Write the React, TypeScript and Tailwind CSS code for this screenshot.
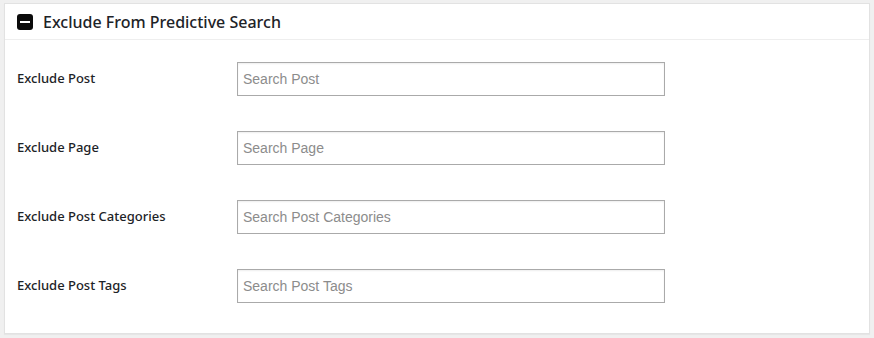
import React from "react";

const rows = [
  { label: "Exclude Post", ph: "Search Post" },
  { label: "Exclude Page", ph: "Search Page" },
  { label: "Exclude Post Categories", ph: "Search Post Categories" },
  { label: "Exclude Post Tags", ph: "Search Post Tags" },
];

export default function App() {
  return (
    <div className="w-[874px] h-[338px] bg-[#f0f0f0] pl-[4px] pt-[3px] font-['Noto_Sans',sans-serif]">
      <div className="w-[866px] h-[331px] bg-white border border-[#e2e2e2] shadow-[0_1px_1px_rgba(0,0,0,0.04)]">
        <div className="h-[36px] border-b border-[#eeeeee] flex items-center pl-[12px] gap-[10px]">
          <div className="w-[16px] h-[16px] rounded-[3px] bg-[#0b0b0b] flex items-center justify-center">
            <div className="w-[10px] h-[2px] bg-white" />
          </div>
          <span className="text-[16px] leading-none text-[#1d2327] font-medium">Exclude From Predictive Search</span>
        </div>
        <div className="pl-[12px] pt-[22px] flex flex-col gap-[35px]">
          {rows.map((r) => (
            <div key={r.label} className="flex items-center">
              <div className="w-[220px] text-[13px] leading-[18px] -mt-[2px] font-medium text-[#1d2327]">{r.label}</div>
              <input
                className="w-[428px] h-[34px] border border-[#aaaaaa] shadow-[inset_0_1px_2px_rgba(0,0,0,0.07)] px-[5px] pb-[1px] text-[14px] font-['Liberation_Sans',Arial,sans-serif] placeholder:text-[#8c8c8c] outline-none"
                placeholder={r.ph}
              />
            </div>
          ))}
        </div>
      </div>
    </div>
  );
}
